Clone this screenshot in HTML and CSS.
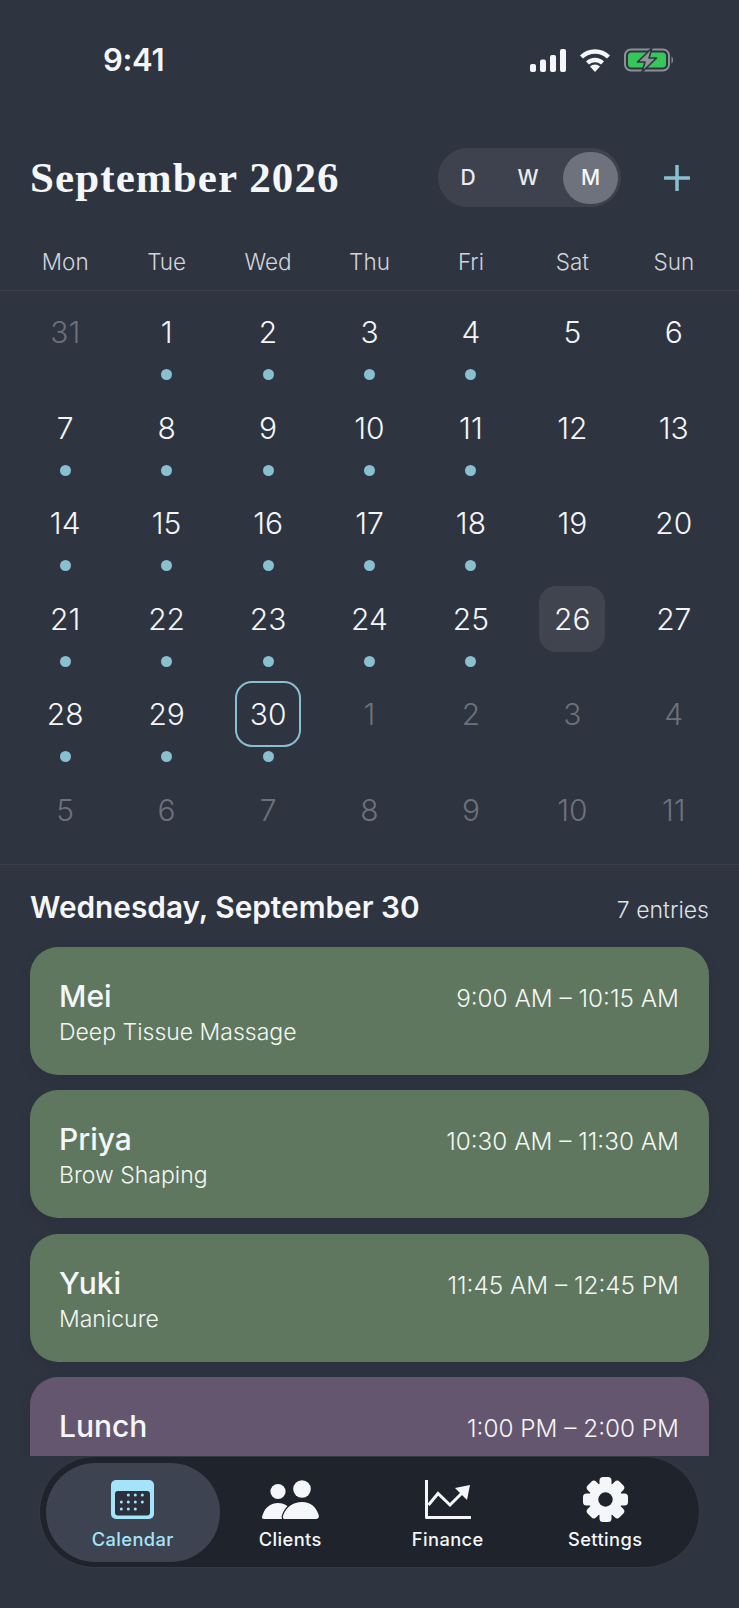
FILE: index.html
```html
<!DOCTYPE html>
<html lang="en">
<head>
  <meta charset="UTF-8">
  <meta name="viewport" content="width=device-width, initial-scale=1.0">
  <title>Calendar</title>
  <link rel="stylesheet" href="styles.css">
</head>
<body>
<div class="app">

  <!-- status bar -->
  <div class="status">
    <span class="clock">9:41</span>
    <div class="status-icons">
      <svg width="36" height="23" viewBox="0 0 36 23" fill="#f4f6fa">
        <rect x="0" y="15" width="6" height="8" rx="2"/>
        <rect x="10" y="10.5" width="6" height="12.5" rx="2"/>
        <rect x="20" y="6" width="6" height="17" rx="2"/>
        <rect x="30" y="0" width="6" height="23" rx="2"/>
      </svg>
      <svg width="32" height="24" viewBox="0 0 32 24">
        <path d="M2.5 9 A19.5 19.5 0 0 1 29.5 9" fill="none" stroke="#f4f6fa" stroke-width="4.4"/>
        <path d="M8.5 15 A11 11 0 0 1 23.5 15" fill="none" stroke="#f4f6fa" stroke-width="4.4"/>
        <path d="M16 24 L11 18.6 A7 7 0 0 1 21 18.6 Z" fill="#f4f6fa"/>
      </svg>
      <svg width="50" height="24" viewBox="0 0 50 24">
        <rect x="1" y="1.5" width="44" height="21" rx="6" fill="none" stroke="#8b9096" stroke-width="2"/>
        <rect x="4" y="4.5" width="38" height="15" rx="3.5" fill="#35c759"/>
        <path d="M47.5 8.5 C49.5 9.5 49.5 14.5 47.5 15.5 Z" fill="#8b9096"/>
        <path d="M28 0 L13.500 14 H21 L18 24 L32.500 10 H25 Z" fill="#8f9499" stroke="#2e3440" stroke-width="1.6" stroke-linejoin="round"/>
      </svg>
    </div>
  </div>

  <!-- month header -->
  <div class="month-head">
    <h1>September 2026</h1>
    <div class="segment">
      <span class="seg-item">D</span>
      <span class="seg-item">W</span>
      <span class="seg-item active">M</span>
    </div>
    <svg class="add" width="26" height="26" viewBox="0 0 26 26">
      <path d="M13 1 V25 M1 13 H25" stroke="#88c0d0" stroke-width="3.500" stroke-linecap="round"/>
    </svg>
  </div>

  <div class="weekdays">
    <span>Mon</span><span>Tue</span><span>Wed</span><span>Thu</span><span>Fri</span><span>Sat</span><span>Sun</span>
  </div>

  <!-- month grid -->
  <div class="grid">
    <div class="day"><span class="num muted">31</span></div>
    <div class="day"><span class="num">1</span><i class="dot"></i></div>
    <div class="day"><span class="num">2</span><i class="dot"></i></div>
    <div class="day"><span class="num">3</span><i class="dot"></i></div>
    <div class="day"><span class="num">4</span><i class="dot"></i></div>
    <div class="day"><span class="num">5</span></div>
    <div class="day"><span class="num">6</span></div>

    <div class="day"><span class="num">7</span><i class="dot"></i></div>
    <div class="day"><span class="num">8</span><i class="dot"></i></div>
    <div class="day"><span class="num">9</span><i class="dot"></i></div>
    <div class="day"><span class="num">10</span><i class="dot"></i></div>
    <div class="day"><span class="num">11</span><i class="dot"></i></div>
    <div class="day"><span class="num">12</span></div>
    <div class="day"><span class="num">13</span></div>

    <div class="day"><span class="num">14</span><i class="dot"></i></div>
    <div class="day"><span class="num">15</span><i class="dot"></i></div>
    <div class="day"><span class="num">16</span><i class="dot"></i></div>
    <div class="day"><span class="num">17</span><i class="dot"></i></div>
    <div class="day"><span class="num">18</span><i class="dot"></i></div>
    <div class="day"><span class="num">19</span></div>
    <div class="day"><span class="num">20</span></div>

    <div class="day"><span class="num">21</span><i class="dot"></i></div>
    <div class="day"><span class="num">22</span><i class="dot"></i></div>
    <div class="day"><span class="num">23</span><i class="dot"></i></div>
    <div class="day"><span class="num">24</span><i class="dot"></i></div>
    <div class="day"><span class="num">25</span><i class="dot"></i></div>
    <div class="day"><span class="num hilite">26</span></div>
    <div class="day"><span class="num">27</span></div>

    <div class="day"><span class="num">28</span><i class="dot"></i></div>
    <div class="day"><span class="num">29</span><i class="dot"></i></div>
    <div class="day"><span class="num today">30</span><i class="dot"></i></div>
    <div class="day"><span class="num muted">1</span></div>
    <div class="day"><span class="num muted">2</span></div>
    <div class="day"><span class="num muted">3</span></div>
    <div class="day"><span class="num muted">4</span></div>

    <div class="day"><span class="num muted">5</span></div>
    <div class="day"><span class="num muted">6</span></div>
    <div class="day"><span class="num muted">7</span></div>
    <div class="day"><span class="num muted">8</span></div>
    <div class="day"><span class="num muted">9</span></div>
    <div class="day"><span class="num muted">10</span></div>
    <div class="day"><span class="num muted">11</span></div>
  </div>

  <!-- entries of the day -->
  <div class="agenda">
    <div class="agenda-head">
      <h2>Wednesday, September 30</h2>
      <span class="count">7 entries</span>
    </div>
    <div class="cards">
      <div class="card green">
        <div>
          <div class="who">Mei</div>
          <div class="what">Deep Tissue Massage</div>
        </div>
        <div class="time">9:00 AM – 10:15 AM</div>
      </div>
      <div class="card green">
        <div>
          <div class="who">Priya</div>
          <div class="what">Brow Shaping</div>
        </div>
        <div class="time">10:30 AM – 11:30 AM</div>
      </div>
      <div class="card green">
        <div>
          <div class="who">Yuki</div>
          <div class="what">Manicure</div>
        </div>
        <div class="time">11:45 AM – 12:45 PM</div>
      </div>
      <div class="card purple">
        <div>
          <div class="who">Lunch</div>
        </div>
        <div class="time">1:00 PM – 2:00 PM</div>
      </div>
    </div>
  </div>

  <!-- bottom tabs -->
  <div class="footer">
    <nav class="tabs">
      <a class="tab active">
        <svg width="43" height="39" viewBox="0 0 43 39">
          <rect width="43" height="39" rx="5" fill="#a5e3fb"/>
          <rect x="4" y="11" width="35" height="24.500" rx="3" fill="#2b303c"/>
          <g fill="#a5e3fb">
            <circle cx="17.300" cy="15" r="1.500"/><circle cx="24.300" cy="15" r="1.500"/><circle cx="31.300" cy="15" r="1.500"/>
            <circle cx="10.300" cy="22" r="1.500"/><circle cx="17.300" cy="22" r="1.500"/><circle cx="24.300" cy="22" r="1.500"/><circle cx="31.300" cy="22" r="1.500"/>
            <circle cx="10.300" cy="29" r="1.500"/><circle cx="17.300" cy="29" r="1.500"/><circle cx="24.300" cy="29" r="1.500"/>
          </g>
        </svg>
        <span>Calendar</span>
      </a>
      <a class="tab">
        <svg width="57" height="39" viewBox="0 0 57 39" fill="#f4f6fa">
          <circle cx="16" cy="11.500" r="7.600"/>
          <circle cx="40" cy="9" r="8.800"/>
          <path d="M2 39 C-1 39 0 36 1 34 C3.500 27 9 23 16 23 C23 23 29 27 31 34 L31 39 Z"/>
          <path d="M23 39 C20.500 39 20.500 36.500 21.500 34.500 C24.500 27 31 22 40 22 C49 22 54 27 56.500 34.500 C57.500 37 56.500 39 54 39 Z" stroke="#1f232c" stroke-width="2.500" paint-order="stroke"/>
        </svg>
        <span>Clients</span>
      </a>
      <a class="tab">
        <svg width="46" height="39" viewBox="0 0 46 39">
          <path d="M1.500 0 V37.500 H45" fill="none" stroke="#f4f6fa" stroke-width="3" stroke-linecap="round" stroke-linejoin="round"/>
          <path d="M3.500 25 L13 13.500 L25 25 L37 13" fill="none" stroke="#f4f6fa" stroke-width="3"/>
          <path d="M30 8 L45 5 L42 20 Z" fill="#f4f6fa"/>
        </svg>
        <span>Finance</span>
      </a>
      <a class="tab">
        <svg class="gear" width="45" height="45" viewBox="-22.500 -22.500 45 45" fill="#f4f6fa">
          <g>
            <rect x="-6" y="-22.500" width="12" height="45" rx="3.500"/>
            <rect x="-6" y="-22.500" width="12" height="45" rx="3.500" transform="rotate(45)"/>
            <rect x="-6" y="-22.500" width="12" height="45" rx="3.500" transform="rotate(90)"/>
            <rect x="-6" y="-22.500" width="12" height="45" rx="3.500" transform="rotate(135)"/>
          </g>
          <circle r="16.500"/>
          <circle r="7.200" fill="#1f232c"/>
        </svg>
        <span>Settings</span>
      </a>
    </nav>
  </div>

</div>
</body>
</html>
```

FILE: styles.css
```css
/* base */
:root {
  --bg: #2e3440;
  --text: #f4f6fa;
  --accent: #88c0d0;
  --line: rgba(255, 255, 255, 0.06);
}

* {
  box-sizing: border-box;
}

html,
body {
  margin: 0;
  padding: 0;
  background-color: var(--bg);
}

body {
  font-family: Inter, "Noto Sans", sans-serif;
  color: var(--text);
}

.app {
  width: 739px;
  height: 1608px;
  display: flex;
  flex-direction: column;
  overflow: hidden;
}

/* status bar */
.status {
  height: 148px;
  flex: none;
  display: flex;
  justify-content: space-between;
  align-items: flex-start;
  padding: 48px 65px 0 103px;
}

.clock {
  font-size: 31px;
  font-weight: 600;
  line-height: 24px;
  letter-spacing: -0.3px;
}

.status-icons {
  display: flex;
  align-items: center;
  gap: 13px;
}

/* month header */
.month-head {
  flex: none;
  height: 59px;
  display: flex;
  align-items: center;
  padding: 0 49px 0 30px;
}

h1 {
  flex: 1;
  margin: 0;
  font-family: "Liberation Serif", serif;
  font-size: 43px;
  font-weight: 700;
  letter-spacing: 1.100px;
  line-height: 59px;
}

.segment {
  width: 183px;
  height: 59px;
  margin-right: 43px;
  padding: 0 3px 0 0;
  display: flex;
  align-items: center;
  border-radius: 30px;
  background-color: #3d424e;
}

.seg-item {
  width: 60px;
  text-align: center;
  font-size: 21px;
  font-weight: 500;
  color: #e9ebef;
}

.seg-item.active {
  width: 55px;
  height: 52px;
  margin-left: 5px;
  line-height: 52px;
  border-radius: 26px;
  background-color: #6e727d;
  color: #f6f7f9;
}

.add {
  flex: none;
}

/* weekday labels */
.weekdays {
  flex: none;
  margin-top: 41px;
  padding: 1px 14.500px 15px;
  display: grid;
  grid-template-columns: repeat(7, 1fr);
  border-bottom: 1px solid var(--line);
  font-size: 22.500px;
  font-weight: 300;
  line-height: 26px;
  text-align: center;
  color: #d2d5da;
}

/* month grid */
.grid {
  flex: none;
  padding: 8px 14.500px 0;
  display: grid;
  grid-template-columns: repeat(7, 1fr);
  grid-template-rows: repeat(5, 95.500px) 87px;
  border-bottom: 1px solid var(--line);
}

.day {
  display: flex;
  flex-direction: column;
  align-items: center;
}

.num {
  width: 66px;
  height: 66px;
  display: flex;
  align-items: center;
  justify-content: center;
  font-size: 30px;
  font-weight: 300;
  border-radius: 17px;
}

.muted {
  color: #6c717c;
}

.hilite {
  background-color: #40444f;
}

.today {
  border: 2.500px solid var(--accent);
}

.dot {
  width: 11px;
  height: 11px;
  margin-top: 4px;
  border-radius: 50%;
  background-color: var(--accent);
}

/* agenda */
.agenda {
  flex: 1;
  min-height: 0;
  padding: 25px 30px 0;
  overflow: hidden;
}

.agenda-head {
  display: flex;
  justify-content: space-between;
  align-items: center;
  height: 34px;
  margin-bottom: 23px;
}

h2 {
  margin: 0;
  font-size: 29.800px;
  font-weight: 600;
  line-height: 34px;
}

.count {
  margin-top: 6px;
  font-size: 23px;
  font-weight: 300;
  color: #dfe2e6;
}

.cards {
  display: flex;
  flex-direction: column;
  gap: 15.500px;
}

.card {
  flex: none;
  height: 128px;
  padding: 31px 30px 0 29px;
  display: flex;
  justify-content: space-between;
  align-items: flex-start;
  border-radius: 28px;
  box-shadow: 0 4px 14px rgba(0, 0, 0, 0.08);
}

.green {
  background-color: #5f775f;
}

.purple {
  background-color: #655670;
}

.who {
  font-size: 30px;
  font-weight: 500;
  line-height: 36px;
}

.what {
  margin-top: 4px;
  font-size: 23px;
  font-weight: 300;
  line-height: 28px;
  color: #f4f6f4;
}

.time {
  margin-top: 2px;
  font-size: 24.300px;
  font-weight: 300;
  line-height: 36px;
  color: #f4f6f4;
}

/* bottom tabs */
.footer {
  flex: none;
  height: 152px;
  padding: 0 39px;
  background-color: var(--bg);
}

.tabs {
  height: 112px;
  display: flex;
  align-items: center;
  padding: 0 14px;
  border: 1px solid rgba(255, 255, 255, 0.1);
  border-radius: 56px;
  background-color: #1f232c;
}

.tab {
  flex: none;
  width: 157.500px;
  height: 99px;
  display: flex;
  flex-direction: column;
  align-items: center;
  justify-content: flex-end;
  gap: 8px;
  padding-bottom: 11px;
  font-size: 18.300px;
  font-weight: 500;
  letter-spacing: 0.400px;
  line-height: 24px;
}

.gear {
  margin: -3px 0;
}

.tab.active {
  width: 174px;
  margin: 0 -8.250px;
  border-radius: 50px;
  background-color: #3d4350;
  color: #a5e3fb;
}
```
